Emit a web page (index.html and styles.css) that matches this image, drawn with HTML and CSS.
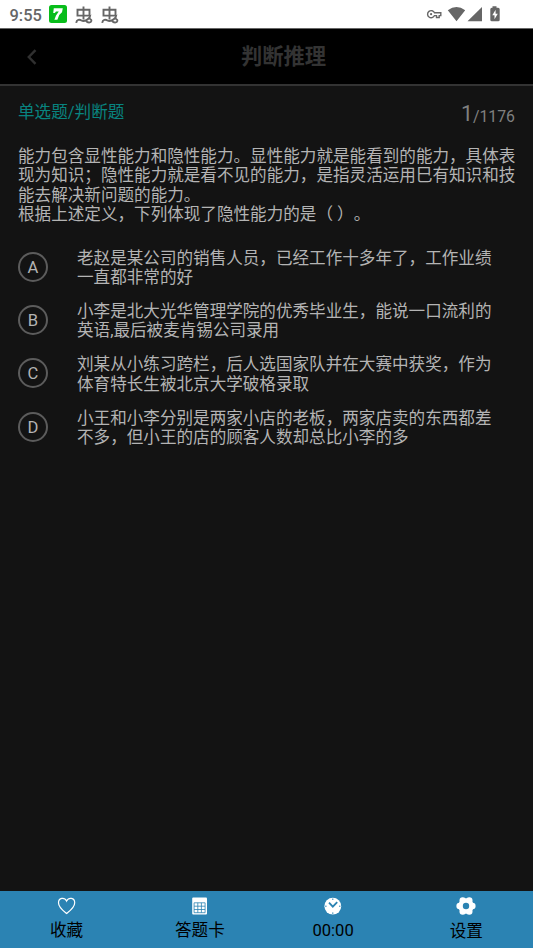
FILE: index.html
```html
<!DOCTYPE html>
<html lang="zh-CN">
<head>
<meta charset="utf-8">
<title>判断推理</title>
<link rel="stylesheet" href="styles.css">
</head>
<body>
<div class="status">
  <span class="clock">9:55</span>
  <svg class="app" viewBox="0 0 18 18"><rect width="18" height="18" rx="2.5" fill="#08bd1b"/><path d="M4.8 3.2H13.8L13 7.2L10.2 10L8.4 14.8H5.4L7 10.6L9.8 6.6H7L5.8 8H4.2Z" fill="#fff"/></svg>
  <svg class="bug" viewBox="0 0 18 18"><path d="M2.5 3.8H14.5V9.6H2.5ZM8.5 .5V13.5M1.2 16.8C1.7 13.5 4.5 13.3 6.5 14.5C9 16.1 12.8 13.3 14.6 11.5C14 13.8 16.8 12.7 16.4 14.9C16 17.1 12.3 17.1 11.2 14.9"/></svg>
  <svg class="bug" viewBox="0 0 18 18"><path d="M2.5 3.8H14.5V9.6H2.5ZM8.5 .5V13.5M1.2 16.8C1.7 13.5 4.5 13.3 6.5 14.5C9 16.1 12.8 13.3 14.6 11.5C14 13.8 16.8 12.7 16.4 14.9C16 17.1 12.3 17.1 11.2 14.9"/></svg>
  <svg class="system" viewBox="0 0 76 18">
    <path d="M8.5 6.8A3.6 3.6 0 1 0 8.5 9.6H10.5V11.5H13.2V9.6H14.8V6.8Z" fill="none" stroke="#666" stroke-width="1.4"/>
    <circle cx="5.1" cy="8.2" r="1.1" fill="#666"/>
    <path d="M21.8 4.2Q30.5-2.2 39.2 4.2L30.5 15.3ZM41.5 15.3H56V1Z" fill="#666"/>
    <path d="M66.5 .2H70.5V1.7H72.2Q73.7 1.7 73.7 3.2V13.7Q73.7 15.2 72.2 15.2H65.8Q64.3 15.2 64.3 13.7V3.2Q64.3 1.7 65.8 1.7H66.5Z" fill="#666"/>
    <path d="M69.6 3.8L66.3 9.2H68.5V13.2L71.8 7.8H69.6Z" fill="#fff"/>
  </svg>
</div>
<header class="header">
  <svg class="back" viewBox="0 0 10 16"><path d="M8.5 1.2L1.8 8L8.5 14.8"/></svg>
  <h1>判断推理</h1>
</header>
<main class="main">
  <div class="meta">
    <span class="kind">单选题/判断题</span>
    <span class="count"><b>1</b>/1176</span>
  </div>
  <p class="question">能力包含显性能力和隐性能力。显性能力就是能看到的能力，具体表<br>现为知识；隐性能力就是看不见的能力，是指灵活运用巳有知识和技<br>能去解决新问题的能力。<br>根据上述定义，下列体现了隐性能力的是（ ）。</p>
  <ul class="options">
    <li><span class="key">A</span><span>老赵是某公司的销售人员，已经工作十多年了，工作业绩<br>一直都非常的好</span></li>
    <li><span class="key">B</span><span>小李是北大光华管理学院的优秀毕业生，能说一口流利的<br>英语,最后被麦肯锡公司录用</span></li>
    <li><span class="key">C</span><span>刘某从小练习跨栏，后人选国家队并在大赛中获奖，作为<br>体育特长生被北京大学破格录取</span></li>
    <li><span class="key">D</span><span>小王和小李分别是两家小店的老板，两家店卖的东西都差<br>不多，但小王的店的顾客人数却总比小李的多</span></li>
  </ul>
</main>
<nav class="tabs">
  <div class="tab"><svg viewBox="0 0 20 20"><path d="M9.6 17.5C6.2 14.8 1.5 11.6 1.5 6.8C1.5 1.4 7.6 1 9.6 5.1C11.6 1 17.7 1.4 17.7 6.8C17.7 11.6 13 14.8 9.6 17.5Z" fill="none" stroke="#fff" stroke-width="1.2"/></svg><span>收藏</span></div>
  <div class="tab"><svg viewBox="0 0 20 20"><rect x="2.2" y="1.6" width="14.8" height="17" rx="1" fill="#fff"/><path d="M4.1 6.8H15.1M4.1 10.2H15.1M4.1 13.5H15.1M4.1 16.7H15.1M4.1 6.8V16.7M7.8 6.8V16.7M11.4 6.8V16.7M15.1 6.8V16.7" fill="none" stroke="#2b83b3" stroke-width=".8"/></svg><span>答题卡</span></div>
  <div class="tab"><svg viewBox="0 0 20 20"><circle cx="9.8" cy="10.2" r="8.4" fill="#fff"/><path d="M6 6.6L9.8 10.6L14.2 6.1" fill="none" stroke="#2b83b3" stroke-width="1.8"/><path d="M9.8 2.5V4M9.8 16.4V17.9M2.1 10.2H3.6M16 10.2H17.5" stroke="#2b83b3"/></svg><span>00:00</span></div>
  <div class="tab"><svg viewBox="0 0 20 20"><g fill="#fff"><circle cx="10" cy="10" r="7.8"/><circle cx="3.6" cy="10" r="3.2"/><circle cx="16.4" cy="10" r="3.2"/><circle cx="6.7" cy="4.4" r="3.2"/><circle cx="13.3" cy="4.4" r="3.2"/><circle cx="6.7" cy="15.6" r="3.2"/><circle cx="13.3" cy="15.6" r="3.2"/></g><circle cx="10" cy="10" r="3.2" fill="#2b83b3"/></svg><span class="low">设置</span></div>
</nav>
</body>
</html>
```
FILE: styles.css
```css
* { box-sizing: border-box; }
body {
  margin: 0;
  height: 948px;
  display: flex;
  flex-direction: column;
  overflow: hidden;
  background: #131313;
  color: #b4b4b4;
  font: 16.58px/19.43px Roboto, "Noto Sans CJK SC", sans-serif;
  text-spacing-trim: space-all;
  white-space: nowrap;
}
svg { display: block; flex: none; overflow: visible; }
.status {
  height: 28px;
  display: flex;
  align-items: center;
  padding: 0 31px 0 9.5px;
  background: #fff;
  color: #666;
}
.clock { width: 39.5px; font-size: 16.4px; font-weight: 500; padding-top: 3px; }
.app { width: 18px; height: 18px; }
.bug { width: 18px; height: 18px; margin: 1px 0 0 8px; }
.bug path { fill: none; stroke: #666; stroke-width: 1.9; }
.system { width: 76px; height: 18px; margin: 2px 0 0 auto; }
.header {
  height: 58px;
  display: grid;
  grid-template-columns: 70px 1fr 36px;
  align-items: center;
  background: #000;
  border-top: 1px solid #666;
  border-bottom: 2px solid #333;
}
.back { width: 10px; height: 16px; margin-left: 27px; }
.back path { fill: none; stroke: #303030; stroke-width: 2.4; }
h1 { margin: 0; padding-top: 1px; color: #333; font-size: 21.3px; font-weight: 700; text-align: center; }
.main { flex: 1; padding: 17px 18px 0; }
.meta { display: flex; justify-content: space-between; height: 43.8px; }
.kind { color: #088480; }
.count { color: #808080; font-size: 15.8px; line-height: 24px; padding-top: 1px; }
.count b { font-size: 21.5px; font-weight: 400; line-height: 20px; vertical-align: 1px; }
.question { margin: 0 0 24.2px; }
.options { margin: 0; padding: 0; list-style: none; display: grid; gap: 14.4px; }
.options li { display: flex; align-items: center; gap: 29px; }
.key {
  width: 30px;
  height: 30px;
  flex: none;
  margin-top: -2.5px;
  border: 2px solid #5c5c5c;
  border-radius: 50%;
  text-align: center;
  line-height: 28px;
}
.tabs {
  height: 57px;
  display: grid;
  grid-template-columns: repeat(4, 1fr);
  background: #2b83b3;
  color: #000;
}
.tab { display: flex; flex-direction: column; align-items: center; padding-top: 5px; gap: 5px; }
.tab svg { width: 20px; height: 20px; }
.low { padding-top: 1px; }
```
